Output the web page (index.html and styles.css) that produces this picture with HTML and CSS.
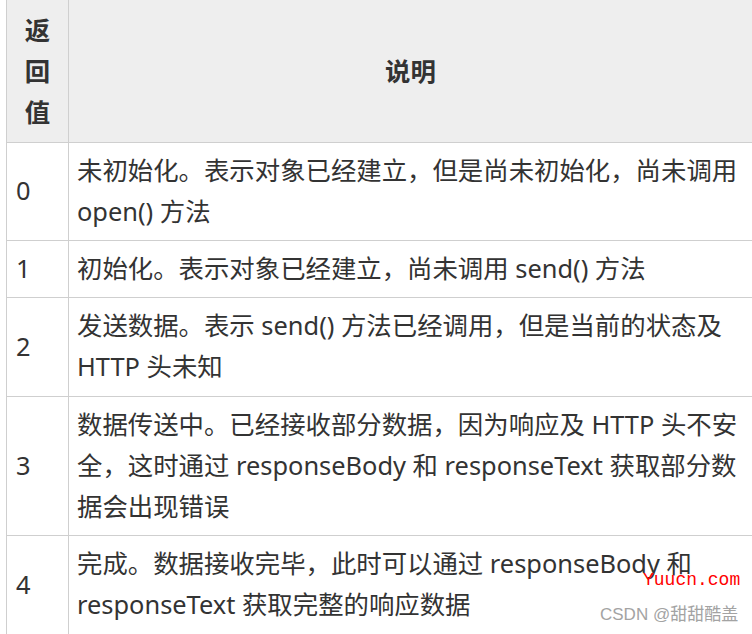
FILE: index.html
```html
<!DOCTYPE html>
<html lang="zh-CN">
<head>
<meta charset="utf-8">
<title>readyState</title>
<link rel="stylesheet" href="styles.css">
</head>
<body>
<div class="page">
  <table class="status-table">
    <thead>
      <tr>
        <th class="col-code">返<br>回<br>值</th>
        <th class="col-desc">说明</th>
      </tr>
    </thead>
    <tbody>
      <tr>
        <td class="code">0</td>
        <td>未初始化。表示对象已经建立，但是尚未初始化，尚未调用<br>open() 方法</td>
      </tr>
      <tr>
        <td class="code">1</td>
        <td>初始化。表示对象已经建立，尚未调用 send() 方法</td>
      </tr>
      <tr>
        <td class="code">2</td>
        <td>发送数据。表示 send() 方法已经调用，但是当前的状态及<br>HTTP 头未知</td>
      </tr>
      <tr>
        <td class="code">3</td>
        <td>数据传送中。已经接收部分数据，因为响应及 HTTP 头不安<br>全，这时通过 responseBody 和 responseText 获取部分数<br>据会出现错误</td>
      </tr>
      <tr>
        <td class="code">4</td>
        <td>完成。数据接收完毕，此时可以通过 responseBody 和<br>responseText 获取完整的响应数据</td>
      </tr>
    </tbody>
  </table>
  <div class="wm-site">Yuucn.com</div>
  <div class="wm-author">CSDN @甜甜酷盖</div>
</div>
</body>
</html>
```

FILE: styles.css
```css
html, body {
  margin: 0;
  padding: 0;
  background: #ffffff;
}
body {
  width: 752px;
  height: 634px;
  overflow: hidden;
  font-family: "Noto Sans", "Noto Sans CJK SC", sans-serif;
}
.page {
  position: relative;
  width: 752px;
  height: 634px;
  padding-left: 6px;
  box-sizing: border-box;
}
.status-table {
  border-collapse: collapse;
  width: 747px;
  table-layout: fixed;
  color: #333333;
  font-size: 25.4px;
  line-height: 41.2px;
}
.status-table th,
.status-table td {
  border: 1px solid #cfcfcf;
}
.status-table thead tr th {
  border-top: none;
}
.status-table th {
  background: #eeeeee;
  font-weight: bold;
  text-align: center;
  padding: 10px 9px 8px;
  color: #333333;
}
.col-code {
  width: 43px;
}
.status-table td {
  padding: 7px 8px 8px;
  vertical-align: middle;
  white-space: nowrap;
}
.status-table td.code {
  padding-left: 9px;
}
.wm-site {
  position: absolute;
  left: 643px;
  top: 568px;
  font-family: "Liberation Mono", monospace;
  font-size: 18px;
  line-height: 24px;
  color: #ff0000;
}
.wm-author {
  position: absolute;
  left: 600px;
  top: 604px;
  font-family: "Liberation Sans", "Noto Sans CJK SC", sans-serif;
  font-size: 17px;
  line-height: 22px;
  color: #a3a3a3;
}
```
